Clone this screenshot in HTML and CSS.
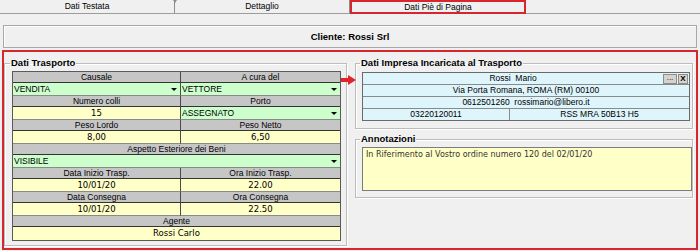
FILE: index.html
```html
<!DOCTYPE html>
<html lang="it">
<head>
    <meta charset="UTF-8">
    <title>Dati Piè di Pagina</title>
    <link rel="stylesheet" href="styles.css">
</head>
<body>
    <!-- Tabs -->
    <div class="tabs">
        <div class="tab first">Dati Testata</div>
        <div class="tab">Dettaglio</div>
        <div class="tab active">Dati Piè di Pagina</div>
    </div>

    <div class="client">Cliente: Rossi Srl</div>

    <div class="footer-panel">
        <!-- Dati Trasporto -->
        <fieldset class="group transport">
            <legend>Dati Trasporto</legend>
            <div class="grid">
                <div class="hd left">Causale</div>
                <div class="hd">A cura del</div>
                <div class="combo left"><span>VENDITA</span><i class="drop"></i></div>
                <div class="combo"><span>VETTORE</span><i class="drop"></i></div>
                <div class="hd left">Numero colli</div>
                <div class="hd">Porto</div>
                <div class="val left">15</div>
                <div class="combo"><span>ASSEGNATO</span><i class="drop"></i></div>
                <div class="hd left">Peso Lordo</div>
                <div class="hd">Peso Netto</div>
                <div class="val left">8,00</div>
                <div class="val">6,50</div>
                <div class="hd wide">Aspetto Esteriore dei Beni</div>
                <div class="combo wide"><span>VISIBILE</span><i class="drop"></i></div>
                <div class="hd left">Data Inizio Trasp.</div>
                <div class="hd">Ora Inizio Trasp.</div>
                <div class="val left">10/01/20</div>
                <div class="val">22.00</div>
                <div class="hd left">Data Consegna</div>
                <div class="hd">Ora Consegna</div>
                <div class="val left">10/01/20</div>
                <div class="val">22.50</div>
                <div class="hd wide">Agente</div>
                <div class="val wide last">Rossi Carlo</div>
            </div>
        </fieldset>

        <div class="right-col">
            <!-- Dati Impresa -->
            <fieldset class="group carrier">
                <legend>Dati Impresa Incaricata al Trasporto</legend>
                <div class="carrier-table">
                    <div class="crow">
                        <span class="cname">Rossi&nbsp; Mario</span>
                        <span class="btn">...</span>
                        <span class="btn btn-x">X</span>
                    </div>
                    <div class="crow">Via Porta Romana, ROMA (RM) 00100</div>
                    <div class="crow">0612501260&nbsp; rossimario@libero.it</div>
                    <div class="crow split">
                        <span class="cell-a">03220120011</span>
                        <span class="cell-b">RSS MRA 50B13 H5</span>
                    </div>
                </div>
            </fieldset>

            <!-- Annotazioni -->
            <fieldset class="group notes">
                <legend>Annotazioni</legend>
                <div class="memo">In Riferimento al Vostro ordine numero 120 del 02/01/20</div>
            </fieldset>
        </div>

        <svg class="arrow" width="15" height="10" viewBox="0 0 15 10">
            <rect x="0" y="3" width="8" height="4" fill="#e0242c"/>
            <polygon points="7,0 15,5 7,10" fill="#e0242c"/>
        </svg>
    </div>
</body>
</html>
```

FILE: styles.css
```css
body {
    margin: 0;
    width: 700px;
    height: 251px;
    overflow: hidden;
    background-color: #f0f0f0;
    font-family: 'Liberation Sans', Arial, sans-serif;
    font-size: 8.5px;
    color: #000;
}

/* Tabs */
.tabs {
    display: flex;
    height: 14px;
    box-sizing: border-box;
    border-bottom: 1px solid #9c9c9c;
}

.tab {
    width: 175px;
    height: 13px;
    box-sizing: border-box;
    border-right: 1px solid #8c8c8c;
    text-align: center;
    line-height: 13px;
    font-size: 8.5px;
}

.tab.first {
    position: relative;
}

/* little notch on top of the first divider */
.tab.first::after {
    content: "";
    position: absolute;
    right: -3px;
    top: 0;
    width: 0;
    height: 0;
    border-left: 2px solid transparent;
    border-right: 2px solid transparent;
    border-top: 3px solid #8c8c8c;
}

.tab.active {
    width: 176px;
    height: 14px;
    border: 2px solid #d8262e;
    line-height: 10px;
}

/* Client header */
.client {
    margin: 11px 3px 0;
    height: 23px;
    box-sizing: border-box;
    border: 1px solid #a8a8a8;
    box-shadow: inset 1px 1px #fff;
    display: flex;
    align-items: center;
    justify-content: center;
    font-weight: bold;
    font-size: 9.5px;
}

/* Red panel */
.footer-panel {
    position: relative;
    margin: 2px 2px 0;
    height: 200px;
    box-sizing: border-box;
    border: 2px solid #d8262e;
    padding: 5px 3px 2px 0;
    display: flex;
}

.group {
    margin: 0;
    min-width: 0;
    border: 1px solid #bcbcbc;
    box-shadow: 1px 1px #fff, inset 1px 1px #fff;
}

.group legend {
    padding: 0 1px;
    margin-left: -2px;
    font-weight: bold;
    font-size: 9.5px;
    line-height: 12px;
}

.transport {
    width: 343px;
    box-sizing: border-box;
    padding: 2px 5px 0 7px;
}

/* Transport grid */
.grid {
    display: grid;
    grid-template-columns: 168px 1fr;
    border: 1px solid #5a5a5a;
}

.grid > div {
    box-sizing: border-box;
    white-space: nowrap;
}

.grid .left {
    border-right: 1px solid #4a4a4a;
}

.grid .wide {
    grid-column: 1 / -1;
}

.hd {
    height: 11px;
    line-height: 10px;
    background-color: #c6c6c6;
    border-bottom: 1px solid #333;
    text-align: center;
}

.val {
    height: 13px;
    line-height: 12px;
    background-color: #ffffc8;
    border-bottom: 1px solid #8a8a8a;
    text-align: center;
    font-family: 'DejaVu Sans', Verdana, sans-serif;
    font-size: 8.5px;
}

.val.last {
    border-bottom: none;
}

.combo {
    height: 13px;
    line-height: 12px;
    background-color: #ccffcc;
    border-bottom: 1px solid #8a8a8a;
    padding: 0 3px 0 1px;
    display: flex;
    align-items: center;
    justify-content: space-between;
}

.drop {
    width: 0;
    height: 0;
    border-left: 3px solid transparent;
    border-right: 3px solid transparent;
    border-top: 3px solid #000;
}

/* Right column */
.right-col {
    flex: 1;
    padding-left: 8px;
    display: flex;
    flex-direction: column;
}

.carrier {
    padding: 3px 2px 7px 6px;
}

.carrier-table {
    border: 1px solid #6a6a6a;
    background-color: #def5fc;
}

.crow {
    height: 12px;
    box-sizing: border-box;
    line-height: 11px;
    border-bottom: 1px solid #8a8a8a;
    text-align: center;
    white-space: nowrap;
}

.crow:last-child {
    border-bottom: none;
    height: 11px;
}

.crow:first-child {
    display: flex;
    align-items: center;
}

.cname {
    flex: 1;
    text-align: center;
}

.btn {
    width: 14px;
    height: 10px;
    box-sizing: border-box;
    border: 1px solid #8c8c8c;
    background-color: #d6d3cc;
    line-height: 6px;
    font-size: 8px;
    text-align: center;
    margin-right: 1px;
}

.btn-x {
    width: 10px;
    line-height: 8px;
    font-size: 8px;
    font-weight: bold;
}

.split {
    display: flex;
}

.cell-a {
    width: 146px;
    border-right: 1px solid #8a8a8a;
}

.cell-b {
    flex: 1;
}

.notes {
    margin-top: 4px;
    padding: 2px 0 6px 6px;
}

.memo {
    height: 44px;
    box-sizing: border-box;
    border: 1px solid #7c7c7c;
    background-color: #ffffc8;
    padding: 2px 3px;
    font-family: 'DejaVu Sans', Verdana, sans-serif;
    font-size: 8px;
    color: #333;
}

.arrow {
    position: absolute;
    left: 337px;
    top: 23px;
}
```
